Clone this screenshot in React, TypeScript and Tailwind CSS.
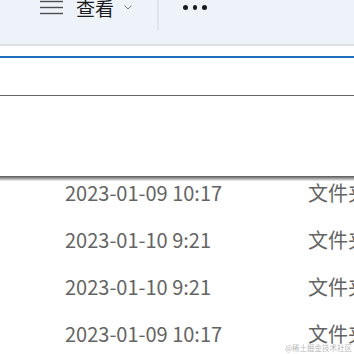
const rows = [
  { date: '2023-01-09 10:17', type: '文件夹' },
  { date: '2023-01-10 9:21', type: '文件夹' },
  { date: '2023-01-10 9:21', type: '文件夹' },
  { date: '2023-01-09 10:17', type: '文件夹' },
];

const font = { fontFamily: '"Noto Sans CJK SC", "Noto Sans", sans-serif' };

export default function App() {
  return (
    <div className="relative w-[354px] h-[354px] overflow-hidden bg-white" style={font}>
      {/* toolbar */}
      <div className="h-[44px] bg-[#eef2f9] flex items-start">
        <div className="flex items-center h-[24px] -mt-[5px] pl-[40px]">
          <svg width="23" height="24" viewBox="0 0 23 24" className="shrink-0">
            <g stroke="#4d4d4d" strokeWidth="1.4">
              <line x1="0" y1="0.5" x2="23" y2="0.5" />
              <line x1="0" y1="6.5" x2="23" y2="6.5" />
              <line x1="0" y1="12.5" x2="23" y2="12.5" />
              <line x1="0" y1="18.5" x2="23" y2="18.5" />
            </g>
          </svg>
          <span className="ml-[13px] text-[19px] leading-none text-[#1b1b1b]">查看</span>
          <svg width="8" height="5" viewBox="0 0 8 5" className="ml-[10px] mt-[1px]">
            <path d="M0.5 0.5 L4 4 L7.5 0.5" fill="none" stroke="#777" strokeWidth="1" />
          </svg>
        </div>
        <div className="ml-[25px] w-[2px] h-[30px] bg-[#e2e5ea]" />
        <div className="ml-[24px] mt-[5px] flex gap-[5px]">
          <span className="w-[4.5px] h-[4.5px] rounded-full bg-[#1a1a1a]" />
          <span className="w-[4.5px] h-[4.5px] rounded-full bg-[#1a1a1a]" />
          <span className="w-[4.5px] h-[4.5px] rounded-full bg-[#1a1a1a]" />
        </div>
      </div>
      <div className="h-[2px] bg-[#dde0e5]" />

      {/* address / column header zone */}
      <div className="h-[10px]" />
      <div className="h-[1.5px] bg-[#1f70c1]" />
      <div className="h-[37px]" />
      <div className="h-[1.5px] bg-[#666666]" />
      <div className="h-[80px]" />
      <div className="h-[5px] bg-gradient-to-b from-[#555555] via-[#a0a0a0] to-[#f4f4f4]" />

      {/* file rows */}
      <div className="flex flex-col">
        {rows.map((r, i) => (
          <div key={i} className="h-[47px] flex items-start text-[20px] leading-[24px] text-[#646464]">
            <span className="pl-[65px] w-[308px] shrink-0 whitespace-nowrap">{r.date}</span>
            <span className="whitespace-nowrap">{r.type}</span>
          </div>
        ))}
      </div>

      <div className="absolute right-[2px] bottom-[3px] text-[7.5px] leading-none text-[#b9b9b9]">
        @稀土掘金技术社区
      </div>
    </div>
  );
}
